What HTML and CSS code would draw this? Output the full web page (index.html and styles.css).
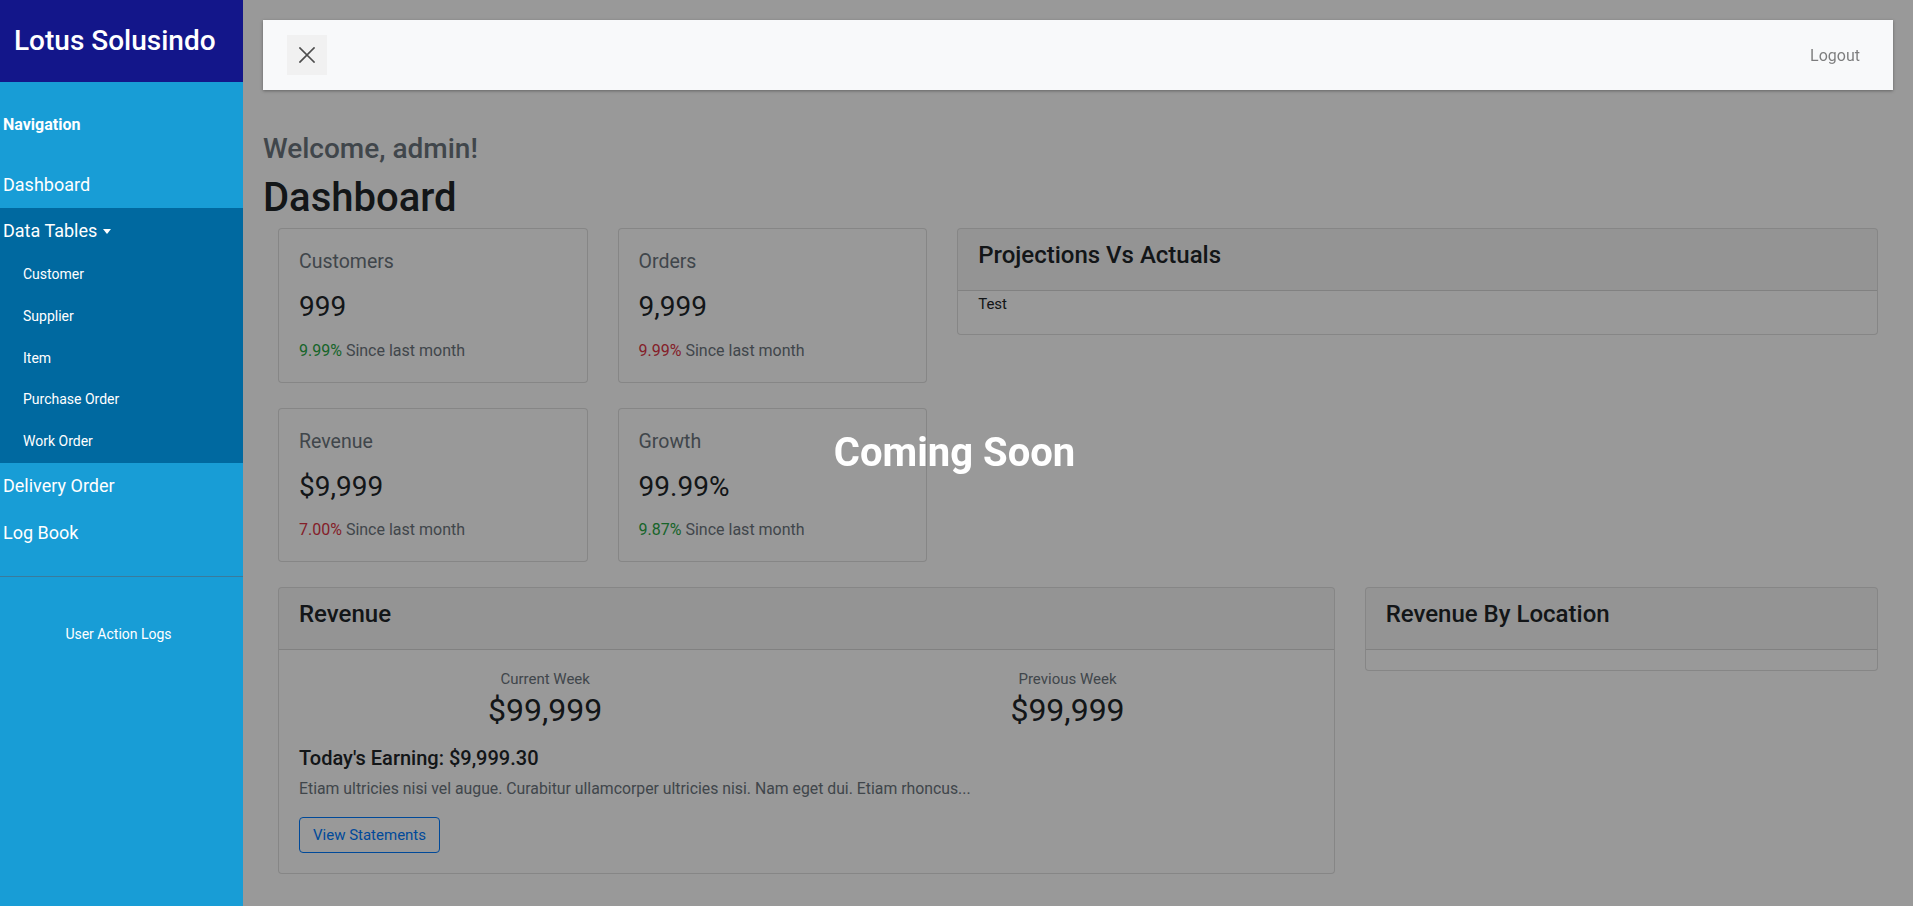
FILE: index.html
```html
<!DOCTYPE html>
<html lang="en">
<head>
<meta charset="utf-8">
<title>Lotus Solusindo - Dashboard</title>
<link rel="stylesheet" href="styles.css">
</head>
<body>
<aside class="sidebar">
  <div class="brand">Lotus Solusindo</div>
  <div class="nav-heading">Navigation</div>
  <a class="nav-item">Dashboard</a>
  <div class="nav-group">
    <a class="nav-item">Data Tables<span class="caret"></span></a>
    <a class="sub-item">Customer</a>
    <a class="sub-item">Supplier</a>
    <a class="sub-item">Item</a>
    <a class="sub-item">Purchase Order</a>
    <a class="sub-item">Work Order</a>
  </div>
  <a class="nav-item tall">Delivery Order</a>
  <a class="nav-item tall">Log Book</a>
  <hr class="side-rule">
  <a class="side-footer">User Action Logs</a>
</aside>

<main class="main">
  <header class="topbar">
    <button class="close-btn" aria-label="Close">
      <svg width="16" height="16" viewBox="0 0 16 16"><path d="M1 1 L15 15 M15 1 L1 15" stroke="#4d4d4d" stroke-width="1.7" fill="none" stroke-linecap="square"/></svg>
    </button>
    <a class="logout">Logout</a>
  </header>

  <h3 class="welcome">Welcome, admin!</h3>
  <h1 class="page-title">Dashboard</h1>

  <div class="row">
    <div class="col-5">
      <div class="inner-row">
        <div class="col-6">
          <div class="card stat">
            <h5 class="stat-title">Customers</h5>
            <h3 class="stat-value">999</h3>
            <div class="stat-note"><span class="up">9.99%</span> Since last month</div>
          </div>
        </div>
        <div class="col-6">
          <div class="card stat">
            <h5 class="stat-title">Orders</h5>
            <h3 class="stat-value">9,999</h3>
            <div class="stat-note"><span class="down">9.99%</span> Since last month</div>
          </div>
        </div>
        <div class="col-6">
          <div class="card stat">
            <h5 class="stat-title">Revenue</h5>
            <h3 class="stat-value">$9,999</h3>
            <div class="stat-note"><span class="down">7.00%</span> Since last month</div>
          </div>
        </div>
        <div class="col-6">
          <div class="card stat">
            <h5 class="stat-title">Growth</h5>
            <h3 class="stat-value">99.99%</h3>
            <div class="stat-note"><span class="up">9.87%</span> Since last month</div>
          </div>
        </div>
      </div>
    </div>
    <div class="col-7">
      <div class="card">
        <div class="card-header"><h4 class="card-title">Projections Vs Actuals</h4></div>
        <div class="card-body-slim"><p>Test</p></div>
      </div>
    </div>
  </div>

  <div class="row">
    <div class="col-8">
      <div class="card last">
        <div class="card-header"><h4 class="card-title">Revenue</h4></div>
        <div class="rev-body">
          <div class="week-row">
            <div class="week">
              <div class="week-label">Current Week</div>
              <h2 class="week-value">$99,999</h2>
            </div>
            <div class="week">
              <div class="week-label">Previous Week</div>
              <h2 class="week-value">$99,999</h2>
            </div>
          </div>
          <h5 class="earning">Today's Earning: $9,999.30</h5>
          <p class="lorem">Etiam ultricies nisi vel augue. Curabitur ullamcorper ultricies nisi. Nam eget dui. Etiam rhoncus...</p>
          <a class="btn-outline">View Statements</a>
        </div>
      </div>
    </div>
    <div class="col-4">
      <div class="card last">
        <div class="card-header"><h4 class="card-title">Revenue By Location</h4></div>
        <div class="empty-body"></div>
      </div>
    </div>
  </div>
</main>

<div class="overlay"><span class="coming">Coming Soon</span></div>
</body>
</html>
```
FILE: styles.css
```css
* { box-sizing: border-box; }
html, body { margin: 0; padding: 0; height: 100%; overflow: hidden; }
body {
  display: flex;
  font-family: Roboto, "Noto Sans", "Liberation Sans", sans-serif;
  font-size: 16px;
  line-height: 1.5;
  color: #212529;
  background: #fff;
}
h1, h2, h3, h4, h5, p { margin: 0; font-weight: 400; }
a { color: inherit; text-decoration: none; }

/* Sidebar */
.sidebar {
  position: relative;
  z-index: 20;
  flex: 0 0 243px;
  width: 243px;
  height: 100vh;
  background: #189dd6;
  color: #fff;
  display: flex;
  flex-direction: column;
}
.brand {
  height: 82px;
  background: #13168a;
  font-size: 28px;
  font-weight: 500;
  line-height: 82px;
  padding-left: 14px;
}
.nav-heading {
  font-size: 16px;
  font-weight: 700;
  line-height: 24px;
  padding: 31px 3px 0;
  margin-bottom: 25px;
}
.nav-item {
  display: block;
  font-size: 18px;
  line-height: 28px;
  padding: 9px 3px;
}
.nav-item.tall { padding: 9.5px 3px; }
.nav-group { background: #0069a0; }
.caret {
  display: inline-block;
  width: 0;
  height: 0;
  margin-left: 6px;
  vertical-align: 3px;
  border-top: 5px solid #fff;
  border-left: 4.5px solid transparent;
  border-right: 4.5px solid transparent;
}
.sub-item {
  display: block;
  font-size: 14px;
  line-height: 21.6px;
  padding: 10px 23px 10.2px;
}
.side-rule {
  margin: 19px 0 0;
  border: 0;
  border-top: 1px solid #3a7b9c;
  height: 0;
}
.side-footer {
  display: block;
  text-align: center;
  font-size: 14px;
  line-height: 21px;
  padding-top: 47px;
  padding-right: 6px;
}

/* Main */
.main {
  flex: 1 1 auto;
  padding: 20px;
  min-width: 0;
}
.topbar {
  position: relative;
  z-index: 15;
  height: 70px;
  background: #f8f9fa;
  box-shadow: 0 1px 3px rgba(0, 0, 0, 0.35);
  display: flex;
  align-items: center;
  justify-content: space-between;
  padding: 0 33px 0 24px;
}
.close-btn {
  width: 40px;
  height: 40px;
  border: 0;
  padding: 0;
  background: #f1f1f1;
  display: flex;
  align-items: center;
  justify-content: center;
}
.logout {
  font-size: 16px;
  line-height: 24px;
  margin-top: 2px;
  color: rgba(0, 0, 0, 0.5);
}
.welcome {
  margin-top: 42px;
  font-size: 28px;
  line-height: 33.6px;
  font-weight: 500;
  color: #6c757d;
  margin-bottom: 8.4px;
}
.page-title {
  font-size: 40px;
  line-height: 48px;
  font-weight: 500;
  margin-bottom: 6px;
}

.row { display: flex; }
.col-5 { flex: 0 0 41.6667%; padding: 0 15px; }
.col-7 { flex: 0 0 58.3333%; padding: 0 15px; }
.col-8 { flex: 0 0 66.6667%; padding: 0 15px; }
.col-4 { flex: 0 0 33.3333%; padding: 0 15px; }
.inner-row { display: flex; flex-wrap: wrap; margin: 0 -15px; }
.col-6 { flex: 0 0 50%; padding: 0 15px; }

.card {
  background: #fff;
  border: 1px solid rgba(0, 0, 0, 0.125);
  border-radius: 4px;
  margin-bottom: 25px;
}
.card.last { margin-bottom: 0; }
.stat { padding: 21px 20px 19px; }
.stat-title {
  font-size: 19.5px;
  line-height: 24px;
  color: #6c757d;
}
.stat-value {
  margin-top: 16px;
  font-size: 28px;
  line-height: 33.6px;
}
.stat-note {
  margin-top: 15px;
  font-size: 16px;
  line-height: 24px;
  color: #6c757d;
}
.up { color: #28a745; }
.down { color: #dc3545; }

.card-header {
  background: rgba(0, 0, 0, 0.03);
  border-bottom: 1px solid rgba(0, 0, 0, 0.125);
  padding: 12px 20px;
  border-radius: 3px 3px 0 0;
}
.card-title {
  font-size: 24px;
  line-height: 28.8px;
  font-weight: 500;
  margin-bottom: 8px;
}
.card-body-slim { padding: 1px 20px 2px; }
.card-body-slim p { margin-bottom: 16px; line-height: 24px; font-size: 15px; }

.rev-body { padding: 18px 20px 20px; }
.week-row { display: flex; margin: 0 -15px; }
.week { flex: 1 1 50%; text-align: center; padding: 0 15px; }
.week-label { font-size: 15px; line-height: 22px; color: #6c757d; }
.week-value { margin-top: 1px; font-size: 32px; line-height: 38px; }
.earning {
  margin-top: 17px;
  font-size: 20px;
  line-height: 24px;
  font-weight: 500;
}
.lorem {
  margin-top: 8.5px;
  font-size: 15.8px;
  line-height: 22.5px;
  color: #6c757d;
  margin-bottom: 16px;
}
.btn-outline {
  display: inline-block;
  font-size: 15px;
  line-height: 22.5px;
  padding: 6px 13px;
  border: 1px solid #007bff;
  border-radius: 4px;
  color: #007bff;
}
.empty-body { height: 20px; }

/* Overlay */
.overlay {
  position: fixed;
  inset: 0;
  z-index: 10;
  background: rgba(0, 0, 0, 0.4);
  display: flex;
  align-items: center;
  justify-content: center;
}
.coming {
  color: #fff;
  font-size: 40px;
  font-weight: 700;
  line-height: 48px;
  margin-left: -4px;
}
```
